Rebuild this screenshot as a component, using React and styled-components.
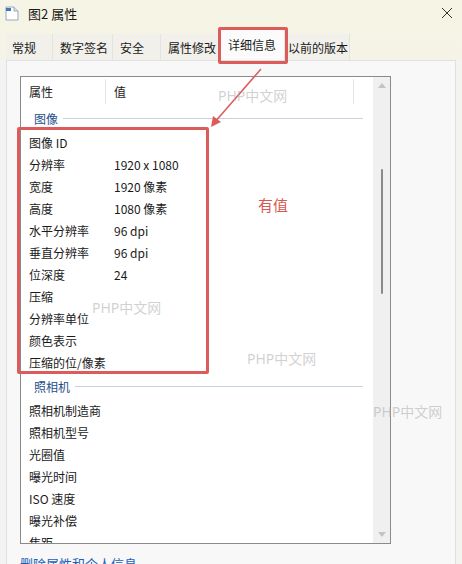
import styled, { createGlobalStyle } from 'styled-components';

const GlobalStyle = createGlobalStyle`
  html, body {
    margin: 0;
    padding: 0;
    background: #f3f2ea;
  }
  body {
    font-family: "Noto Sans CJK SC", "Noto Sans", sans-serif;
    color: #1a1a1a;
  }
`;

const Window = styled.div`
  position: relative;
  width: 462px;
  height: 564px;
  overflow: hidden;
  background: linear-gradient(#f6f4e4 0, #f5f3e6 60px, #f3f3f1 61px);
`;

const TitleBar = styled.div`
  height: 26px;
  display: flex;
  align-items: center;
  padding-left: 5px;
  gap: 9px;
  font-size: 13px;
`;

const CloseButton = styled.div`
  margin-left: auto;
  width: 30px;
  height: 26px;
  display: flex;
  align-items: center;
  justify-content: center;
`;

const TabStrip = styled.div`
  display: flex;
  align-items: flex-end;
  height: 34px;
  padding-left: 6px;
`;

const Tab = styled.div`
  width: ${(p) => p.w}px;
  height: ${(p) => (p.active ? '30px' : '26px')};
  padding-left: ${(p) => p.pad}px;
  padding-bottom: ${(p) => (p.active ? '2px' : '0')};
  display: flex;
  align-items: center;
  font-size: 12px;
  white-space: nowrap;
  background: ${(p) => (p.active ? '#fbfbfb' : '#f1f0ea')};
  border-right: 1px solid #e4e3dc;
  box-sizing: border-box;
`;

const Panel = styled.div`
  margin: 0 6px;
  height: 520px;
  box-sizing: border-box;
  border: 1px solid #e0e0e0;
  background: #f8f8f8;
  padding: 15px 0 0 13px;
`;

const ListBox = styled.div`
  width: 371px;
  height: 468px;
  box-sizing: border-box;
  border: 1px solid #8a8a8a;
  background: #fff;
  display: flex;
  overflow: hidden;
`;

const ListBody = styled.div`
  flex: 1;
  overflow: hidden;
`;

const HeaderRow = styled.div`
  height: 29px;
  display: flex;
  align-items: center;
  font-size: 12px;
`;

const HeaderCell = styled.div`
  width: ${(p) => p.w}px;
  height: 25px;
  padding-left: 8px;
  box-sizing: border-box;
  display: flex;
  align-items: center;
  border-right: ${(p) => (p.sep ? '1px solid #e5e5e5' : 'none')};
`;

const GroupRow = styled.div`
  height: ${(p) => p.h}px;
  display: flex;
  align-items: center;
  padding: 0 10px 0 13px;
  font-size: 12px;
  color: #1f4f8a;
  gap: 5px;
  white-space: nowrap;

  &::after {
    content: '';
    flex: 1;
    height: 1px;
    background: #c9d3de;
  }
`;

const Row = styled.div`
  height: 22px;
  display: flex;
  align-items: center;
  padding-left: 8px;
  font-size: 12px;
  white-space: nowrap;
`;

const Name = styled.div`
  width: 85px;
`;

const ScrollBar = styled.div`
  width: 17px;
  background: #f0f0f0;
  display: flex;
  flex-direction: column;
  align-items: center;
  justify-content: space-between;
  padding: 6px 0 6px;
  box-sizing: border-box;
`;

const Thumb = styled.div`
  width: 2px;
  height: 125px;
  background: #8a8a8a;
  border-radius: 1px;
  margin-top: -158px;
`;

const Link = styled.div`
  margin-top: 10px;
  font-size: 13px;
  color: #1f5fb8;
`;

const Highlight = styled.div`
  position: absolute;
  left: ${(p) => p.x}px;
  top: ${(p) => p.y}px;
  width: ${(p) => p.w}px;
  height: ${(p) => p.h}px;
  box-sizing: border-box;
  border: 3px solid #dc5b5b;
  border-radius: 2px;
  pointer-events: none;
`;

const Note = styled.div`
  position: absolute;
  left: 258px;
  top: 194px;
  font-size: 15px;
  color: #d65a52;
`;

const Watermark = styled.div`
  position: absolute;
  left: ${(p) => p.x}px;
  top: ${(p) => p.y}px;
  font-family: "Noto Sans", "Noto Sans CJK SC", sans-serif;
  font-size: 14px;
  color: rgba(170, 170, 170, 0.55);
  pointer-events: none;
`;

const Arrow = styled.svg`
  position: absolute;
  left: 0;
  top: 0;
  pointer-events: none;
`;

const imageRows = [
  ['图像 ID', ''],
  ['分辨率', '1920 x 1080'],
  ['宽度', '1920 像素'],
  ['高度', '1080 像素'],
  ['水平分辨率', '96 dpi'],
  ['垂直分辨率', '96 dpi'],
  ['位深度', '24'],
  ['压缩', ''],
  ['分辨率单位', ''],
  ['颜色表示', ''],
  ['压缩的位/像素', ''],
];

const cameraRows = ['照相机制造商', '照相机型号', '光圈值', '曝光时间', 'ISO 速度', '曝光补偿', '焦距'];

// label, width, left padding
const tabs = [
  ['常规', 47, 6],
  ['数字签名', 60, 7],
  ['安全', 48, 7],
  ['属性修改', 59, 7],
  ['详细信息', 65, 8],
  ['以前的版本', 65, 3],
];

function FileIcon() {
  return (
    <svg width="14" height="15" viewBox="0 0 14 15">
      <path d="M1 1h8l4 4v9H1z" fill="#fff" stroke="#9aa7b8" strokeWidth="1" />
      <path d="M9 1v4h4" fill="#dfe6ef" stroke="#9aa7b8" strokeWidth="1" />
      <rect x="1" y="2" width="5" height="3" fill="#3b78c4" />
    </svg>
  );
}

export default function App() {
  return (
    <>
      <GlobalStyle />
      <Window>
        <TitleBar>
          <FileIcon />
          <span>图2 属性</span>
          <CloseButton>
            <svg width="12" height="12" viewBox="0 0 12 12">
              <path d="M1 1l10 10M11 1L1 11" stroke="#333" strokeWidth="1" />
            </svg>
          </CloseButton>
        </TitleBar>
        <TabStrip>
          {tabs.map(([t, w, pad], i) => (
            <Tab key={t} active={i === 4} w={w} pad={pad}>
              {t}
            </Tab>
          ))}
        </TabStrip>
        <Panel>
          <ListBox>
            <ListBody>
              <HeaderRow>
                <HeaderCell w={85} sep>属性</HeaderCell>
                <HeaderCell w={248} sep>值</HeaderCell>
              </HeaderRow>
              <GroupRow h={25}>图像</GroupRow>
              {imageRows.map(([n, v]) => (
                <Row key={n}>
                  <Name>{n}</Name>
                  <span>{v}</span>
                </Row>
              ))}
              <GroupRow h={26}>照相机</GroupRow>
              {cameraRows.map((n) => (
                <Row key={n}>
                  <Name>{n}</Name>
                </Row>
              ))}
            </ListBody>
            <ScrollBar>
              <svg width="8" height="5" viewBox="0 0 8 5">
                <path d="M0 5L4 0L8 5z" fill="#c4c4c4" />
              </svg>
              <Thumb />
              <svg width="8" height="5" viewBox="0 0 8 5">
                <path d="M0 0L4 5L8 0z" fill="#c4c4c4" />
              </svg>
            </ScrollBar>
          </ListBox>
          <Link>删除属性和个人信息</Link>
        </Panel>

        <Highlight x={218} y={27} w={70} h={37} />
        <Highlight x={17} y={127} w={192} h={247} />
        <Arrow width="462" height="564">
          <line x1="261" y1="69" x2="214" y2="123" stroke="#dc5b5b" strokeWidth="1.5" />
          <path d="M211 127L213 116L221 122z" fill="#dc5b5b" />
        </Arrow>
        <Note>有值</Note>
        <Watermark x={218} y={85}>PHP中文网</Watermark>
        <Watermark x={92} y={297}>PHP中文网</Watermark>
        <Watermark x={247} y={348}>PHP中文网</Watermark>
        <Watermark x={373} y={401}>PHP中文网</Watermark>
      </Window>
    </>
  );
}
